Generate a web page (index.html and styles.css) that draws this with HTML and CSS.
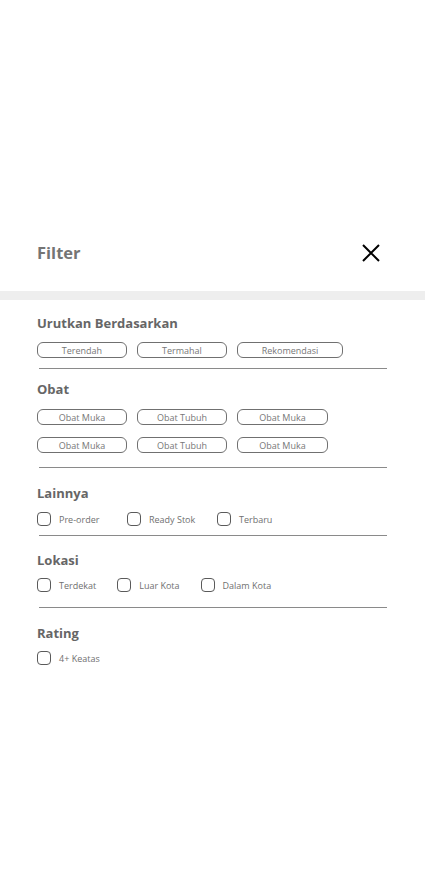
FILE: index.html
```html
<!DOCTYPE html>
<html lang="id">
<head>
<meta charset="utf-8">
<title>Filter</title>
<link rel="stylesheet" href="styles.css">
</head>
<body>
<div class="sheet">
  <header class="header">
    <h1 class="title">Filter</h1>
    <button class="close" aria-label="Tutup">
      <svg width="18" height="18" viewBox="0 0 18 18"><path d="M1 1 L17 17 M17 1 L1 17" stroke="#000" stroke-width="2" fill="none"/></svg>
    </button>
  </header>
  <div class="bar"></div>

  <section class="section s-sort">
    <h2 class="stitle">Urutkan Berdasarkan</h2>
    <div class="chips">
      <span class="chip">Terendah</span>
      <span class="chip">Termahal</span>
      <span class="chip wide">Rekomendasi</span>
    </div>
    <hr class="divider d1">
  </section>

  <section class="section s-obat">
    <h2 class="stitle">Obat</h2>
    <div class="chips grid">
      <span class="chip">Obat Muka</span>
      <span class="chip">Obat Tubuh</span>
      <span class="chip">Obat Muka</span>
      <span class="chip">Obat Muka</span>
      <span class="chip">Obat Tubuh</span>
      <span class="chip">Obat Muka</span>
    </div>
    <hr class="divider d2">
  </section>

  <section class="section s-lain">
    <h2 class="stitle">Lainnya</h2>
    <div class="checks fixed">
      <label class="check"><span class="box"></span>Pre-order</label>
      <label class="check"><span class="box"></span>Ready Stok</label>
      <label class="check"><span class="box"></span>Terbaru</label>
    </div>
    <hr class="divider d3">
  </section>

  <section class="section s-lokasi">
    <h2 class="stitle">Lokasi</h2>
    <div class="checks">
      <label class="check"><span class="box"></span>Terdekat</label>
      <label class="check"><span class="box"></span>Luar Kota</label>
      <label class="check"><span class="box"></span>Dalam Kota</label>
    </div>
    <hr class="divider d4">
  </section>

  <section class="section s-rating">
    <h2 class="stitle">Rating</h2>
    <div class="checks">
      <label class="check"><span class="box"></span>4+ Keatas</label>
    </div>
  </section>
</div>
</body>
</html>
```
FILE: styles.css
```css
* { box-sizing: border-box; }
html, body { margin: 0; padding: 0; background: #fff; }
body { font-family: "Open Sans", "Noto Sans", "Liberation Sans", sans-serif; width: 425px; height: 882px; overflow: hidden; }

.sheet { padding-top: 236px; }

.header {
  display: flex;
  align-items: center;
  justify-content: space-between;
  height: 34px;
  padding: 0 45px 0 37px;
  margin-bottom: 21px;
}
.title {
  margin: 0;
  font-size: 16.5px;
  font-weight: 700;
  color: #747474;
  line-height: 22px;
}
.close {
  border: 0;
  background: none;
  padding: 0;
  width: 18px;
  height: 18px;
  display: flex;
}

.bar { height: 9px; background: #eeeeee; }

.section { padding: 0 38px 0 37px; }
.stitle {
  margin: 0;
  font-size: 13px;
  font-weight: 700;
  color: #666;
  line-height: 18px;
}

.s-sort { padding-top: 14px; }
.s-obat { padding-top: 11px; }
.s-lain { padding-top: 16px; }
.s-lokasi { padding-top: 15px; }
.s-rating { padding-top: 16px; }

.chips {
  display: flex;
  gap: 10px;
  margin-top: 10px;
}
.s-obat .chips { margin-top: 11px; }
.chips.grid {
  display: grid;
  grid-template-columns: 90px 90px 91px;
  column-gap: 10px;
  row-gap: 12px;
}
.chip {
  width: 90px;
  height: 16px;
  border: 1px solid #707070;
  border-radius: 6px;
  font-size: 9px;
  color: #777;
  display: flex;
  align-items: center;
  justify-content: center;
  line-height: 1;
}
.chips.grid .chip { width: auto; }
.chip.wide { width: 106px; }

.divider {
  border: 0;
  border-top: 1px solid #8a8a8a;
  margin: 10px 0 0 2px;
  height: 0;
}
.d2 { margin-top: 14px; }
.d3 { margin-top: 9px; }
.d4 { margin-top: 15px; }

.checks {
  display: flex;
  gap: 21px;
  margin-top: 10px;
}
.s-lokasi .checks, .s-rating .checks { margin-top: 9px; }
.checks.fixed {
  display: grid;
  grid-template-columns: 90px 90px 90px;
  gap: 0;
}
.check {
  display: flex;
  align-items: center;
  gap: 8px;
  height: 14px;
  font-size: 9px;
  color: #707070;
  line-height: 1;
}
.box {
  width: 14px;
  height: 14px;
  border: 1px solid #5a5a5a;
  border-radius: 4px;
  flex: none;
}
```
